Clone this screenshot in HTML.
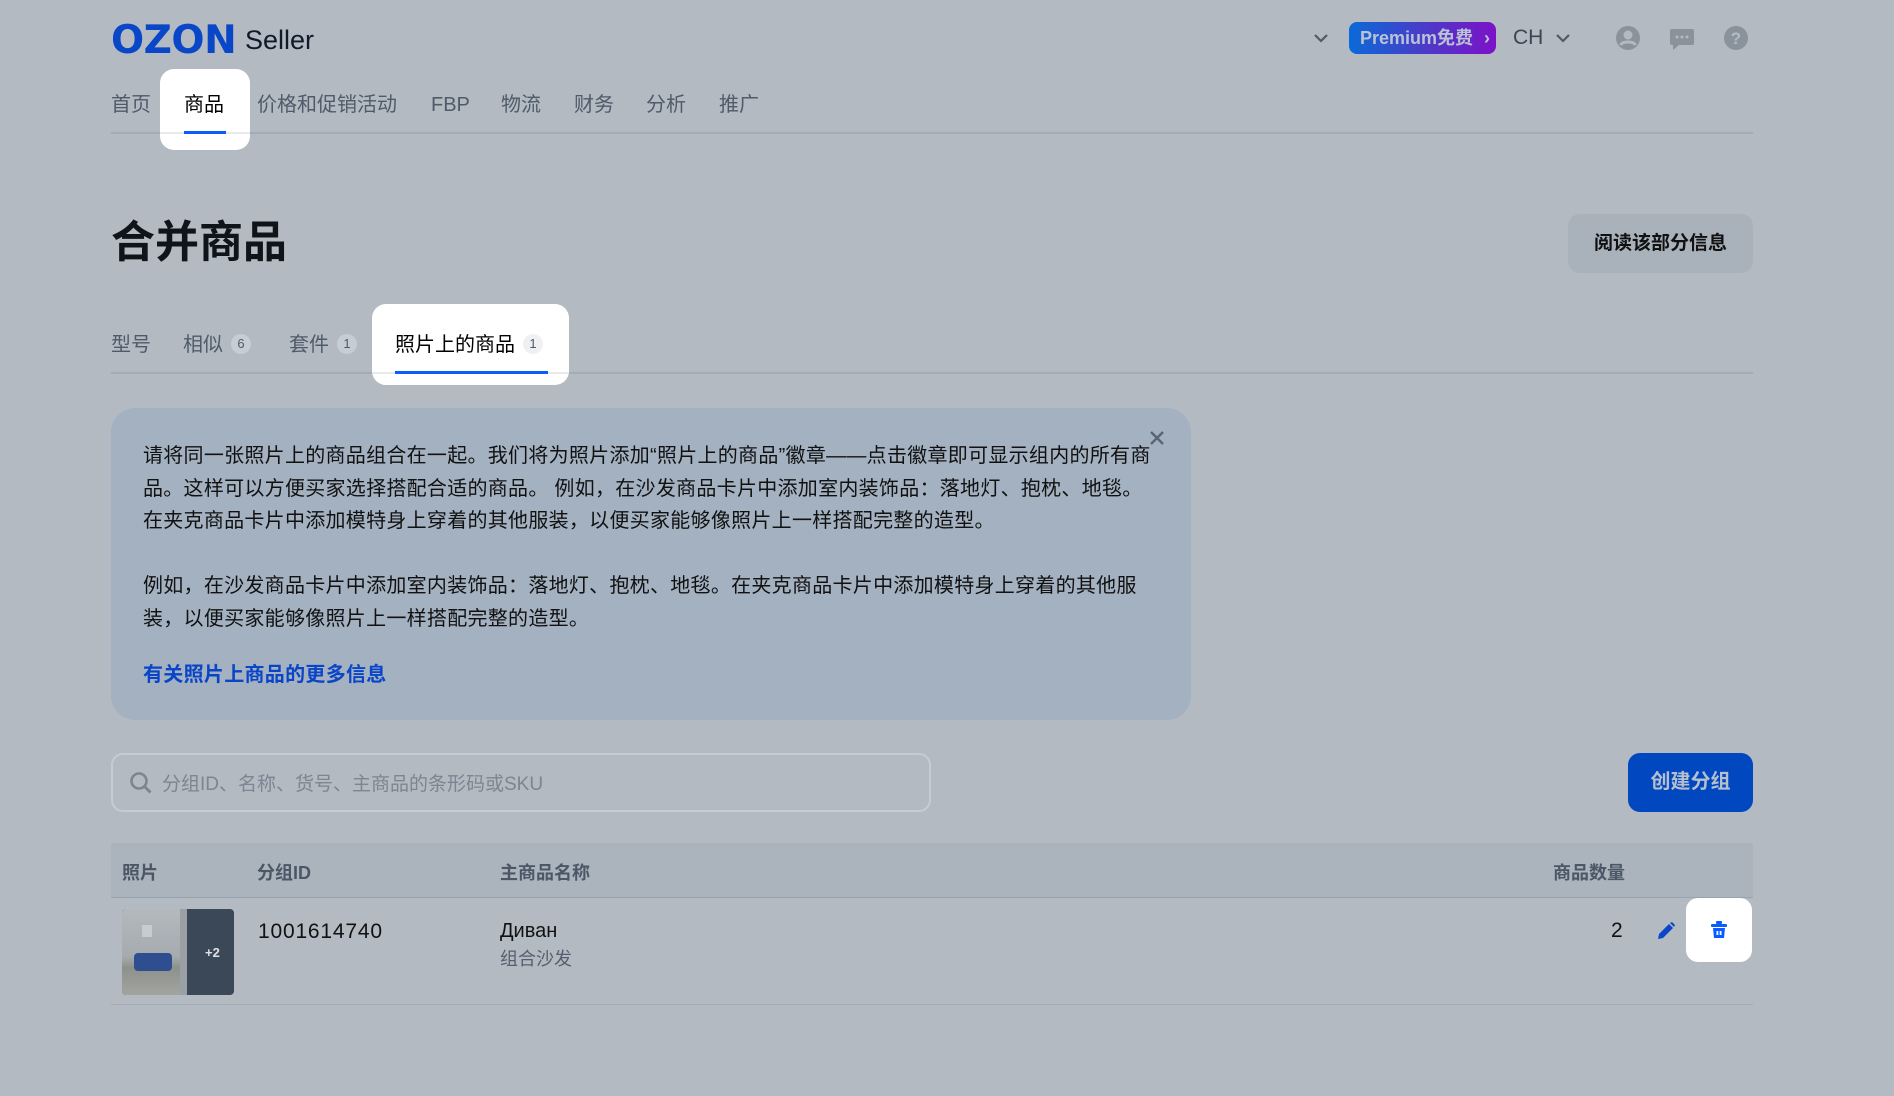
<!DOCTYPE html>
<html><head><meta charset="utf-8"><style>
*{margin:0;padding:0;box-sizing:border-box}
body{width:1894px;height:1096px;background:#b3bac2;font-family:"Liberation Sans","Noto Sans CJK SC",sans-serif;color:#0f1419;position:relative;overflow:hidden}
.a{position:absolute;white-space:nowrap}
.nav{font-size:20px;color:#4f5b69;top:92px;line-height:26px;height:26px}
.tab{font-size:20px;color:#4f5b69;top:332px;line-height:26px}
.badge{display:inline-block;background:#c7cdd4;color:#4f5b69;font-size:13px;border-radius:10px;width:20px;height:20px;line-height:20px;text-align:center;vertical-align:3px;margin-left:8px}
.info{font-size:20px;line-height:32.5px;color:#111;letter-spacing:0.28px}
.th{font-size:18px;font-weight:bold;color:#4c5766}
</style></head><body>
<div class="a" style="left:111px;top:18px;font-size:39px;font-weight:900;color:#0a47c8;letter-spacing:-0.5px;font-family:'DejaVu Sans',sans-serif">OZON</div>
<div class="a" style="left:245px;top:25px;font-size:27px;color:#0f1a2a">Seller</div>

<div class="a" style="left:160px;top:69px;width:90px;height:81px;background:#fff;border-radius:14px"></div>
<div class="a nav" style="left:111px">首页</div>
<div class="a nav" style="left:184px;color:#000">商品</div>
<div class="a nav" style="left:257px">价格和促销活动</div>
<div class="a nav" style="left:431px">FBP</div>
<div class="a nav" style="left:501px">物流</div>
<div class="a nav" style="left:574px">财务</div>
<div class="a nav" style="left:646px">分析</div>
<div class="a nav" style="left:719px">推广</div>
<div class="a" style="left:111px;top:132px;width:1642px;height:2px;background:#a3acb6"></div>
<div class="a" style="left:160px;top:132px;width:90px;height:2px;background:#e8ebee"></div>
<div class="a" style="left:184px;top:131px;width:42px;height:3px;background:#0a5cff"></div>

<svg class="a" style="left:1313px;top:32px" width="16" height="12"><path d="M2 3l6 6 6-6" stroke="#4f5b69" stroke-width="2.2" fill="none"/></svg>
<div class="a" style="left:1349px;top:22px;width:147px;height:32px;border-radius:8px;background:linear-gradient(90deg,#0a6ad8,#4a3cc8,#7c12c8);color:#b9c3d4;font-weight:bold;font-size:18px;line-height:32px;padding-left:11px">Premium免费 <span style="margin-left:6px">›</span></div>
<div class="a" style="left:1513px;top:26px;font-size:21px;color:#3c4654">CH</div>
<svg class="a" style="left:1555px;top:32px" width="16" height="12"><path d="M2 3l6 6 6-6" stroke="#4f5b69" stroke-width="2.2" fill="none"/></svg>
<svg class="a" style="left:1615px;top:25px" width="26" height="26"><circle cx="13" cy="13" r="12" fill="#8a929c"/><circle cx="13" cy="10" r="4.5" fill="#b3bac2"/><path d="M5.5 20c2-4 13-4 15 0" stroke="#b3bac2" stroke-width="3" fill="none"/></svg>
<svg class="a" style="left:1669px;top:26px" width="26" height="26"><path d="M3 3h20a2 2 0 0 1 2 2v12a2 2 0 0 1-2 2H10l-6 5v-5H3a2 2 0 0 1-2-2V5a2 2 0 0 1 2-2z" fill="#8a929c"/><circle cx="8" cy="11" r="1.5" fill="#b3bac2"/><circle cx="13" cy="11" r="1.5" fill="#b3bac2"/><circle cx="18" cy="11" r="1.5" fill="#b3bac2"/></svg>
<svg class="a" style="left:1723px;top:25px" width="26" height="26"><circle cx="13" cy="13" r="12" fill="#8a929c"/><text x="13" y="19" text-anchor="middle" font-size="17" font-weight="bold" fill="#b3bac2" font-family="Liberation Sans">?</text></svg>

<div class="a" style="left:111px;top:206px;font-size:44px;font-weight:bold;color:#0f1419">合并商品</div>
<div class="a" style="left:1568px;top:214px;width:185px;height:59px;border-radius:12px;background:#a9b1bb;font-size:19px;font-weight:bold;line-height:59px;text-align:center;color:#111">阅读该部分信息</div>

<div class="a" style="left:372px;top:304px;width:197px;height:81px;background:#fff;border-radius:14px"></div>
<div class="a tab" style="left:111px">型号</div>
<div class="a tab" style="left:183px">相似<span class="badge">6</span></div>
<div class="a tab" style="left:289px">套件<span class="badge">1</span></div>
<div class="a tab" style="left:395px;color:#000">照片上的商品<span class="badge" style="background:#eef0f2">1</span></div>
<div class="a" style="left:111px;top:372px;width:1642px;height:2px;background:#a3acb6"></div>
<div class="a" style="left:372px;top:372px;width:197px;height:2px;background:#e8ebee"></div>
<div class="a" style="left:395px;top:371px;width:153px;height:3px;background:#0a5cff"></div>

<div class="a" style="left:111px;top:408px;width:1080px;height:312px;border-radius:24px;background:#a3b1c1"></div>
<svg class="a" style="left:1149px;top:430px" width="16" height="16"><path d="M2 2l12 12M14 2L2 14" stroke="#5a6574" stroke-width="2.4"/></svg>
<div class="a info" style="left:143px;top:440px">请将同一张照片上的商品组合在一起。我们将为照片添加“照片上的商品”徽章——点击徽章即可显示组内的所有商<br>品。这样可以方便买家选择搭配合适的商品。 例如，在沙发商品卡片中添加室内装饰品：落地灯、抱枕、地毯。<br>在夹克商品卡片中添加模特身上穿着的其他服装，以便买家能够像照片上一样搭配完整的造型。</div>
<div class="a info" style="left:143px;top:570px">例如，在沙发商品卡片中添加室内装饰品：落地灯、抱枕、地毯。在夹克商品卡片中添加模特身上穿着的其他服<br>装，以便买家能够像照片上一样搭配完整的造型。</div>
<div class="a" style="left:143px;top:658px;font-size:20px;font-weight:bold;color:#0a45c8;letter-spacing:0.3px">有关照片上商品的更多信息</div>

<div class="a" style="left:111px;top:753px;width:820px;height:59px;border:2px solid #c6ccd3;border-radius:12px"></div>
<svg class="a" style="left:129px;top:771px" width="24" height="24"><circle cx="10" cy="10" r="7.5" stroke="#7c8591" stroke-width="2.6" fill="none"/><path d="M15.5 15.5l6 6" stroke="#7c8591" stroke-width="2.8"/></svg>
<div class="a" style="left:162px;top:769px;font-size:19px;color:#7c8591">分组ID、名称、货号、主商品的条形码或SKU</div>
<div class="a" style="left:1628px;top:753px;width:125px;height:59px;border-radius:12px;background:#0047c0;color:#b5bfce;font-size:20px;font-weight:bold;line-height:59px;text-align:center">创建分组</div>

<div class="a" style="left:111px;top:843px;width:1642px;height:55px;background:#abb3bd"></div>
<div class="a" style="left:111px;top:897px;width:1642px;height:1px;background:#98a3b0"></div>
<div class="a th" style="left:122px;top:859px">照片</div>
<div class="a th" style="left:257px;top:859px">分组ID</div>
<div class="a th" style="left:500px;top:859px">主商品名称</div>
<div class="a th" style="left:1553px;top:859px">商品数量</div>

<div class="a" style="left:122px;top:909px;width:112px;height:86px;border-radius:4px;overflow:hidden;background:#3a4858">
<div style="position:absolute;left:0;top:0;width:65px;height:86px;background:linear-gradient(180deg,#b4b9be 0%,#a6abb0 55%,#8d918c 68%,#a2a49f 100%)"></div>
<div style="position:absolute;left:58px;top:0;width:7px;height:86px;background:#9aa0a6"></div>
<div style="position:absolute;left:12px;top:44px;width:38px;height:18px;background:#2f4e8f;border-radius:4px"></div>
<div style="position:absolute;left:20px;top:16px;width:10px;height:12px;background:#c8ccd0"></div>
<div style="position:absolute;left:83px;top:36px;color:#dfe3e8;font-size:13px;font-weight:bold">+2</div>
</div>
<div class="a" style="left:258px;top:920px;font-size:21px;color:#111;letter-spacing:0.8px">1001614740</div>
<div class="a" style="left:500px;top:920px;font-size:20px;color:#111">Диван</div>
<div class="a" style="left:500px;top:945px;font-size:18px;color:#55606e">组合沙发</div>
<div class="a" style="left:1611px;top:919px;font-size:21px;color:#111">2</div>
<svg class="a" style="left:1656px;top:921px" width="20" height="20"><path d="M2 18l1-5L13 3l4 4L7 17z" fill="#0a47c8"/><path d="M14 2l2-1 3 3-1 2z" fill="#0a47c8"/></svg>
<div class="a" style="left:1686px;top:898px;width:66px;height:64px;background:#fff;border-radius:12px"></div>
<svg class="a" style="left:1710px;top:920px" width="18" height="20"><rect x="1" y="4" width="16" height="3" rx="1" fill="#0a5cff"/><rect x="6" y="1" width="6" height="3" rx="1" fill="#0a5cff"/><path d="M3 8h12l-1 10H4z" fill="#0a5cff"/><rect x="6.5" y="11" width="1.8" height="4" fill="#fff"/><rect x="9.7" y="11" width="1.8" height="4" fill="#fff"/></svg>
<div class="a" style="left:111px;top:1004px;width:1642px;height:1px;background:#a3acb6"></div>
</body></html>
